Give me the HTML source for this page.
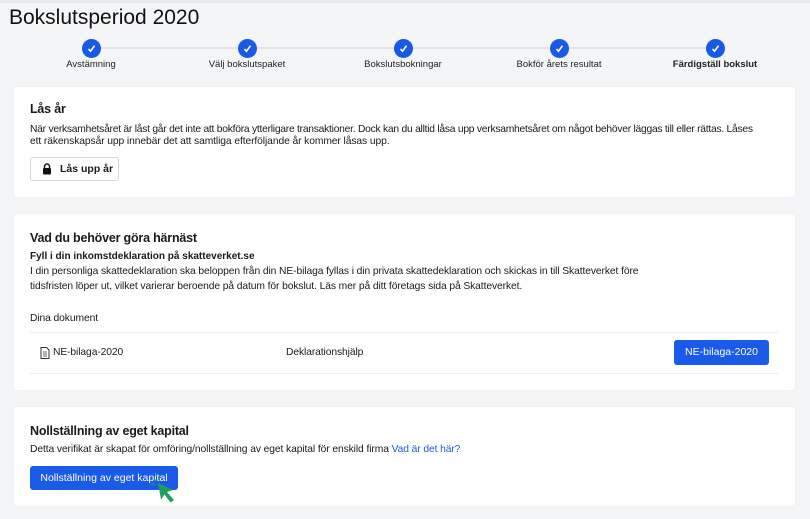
<!DOCTYPE html>
<html><head><meta charset="utf-8"><style>
*{margin:0;padding:0;box-sizing:border-box}
body{width:810px;height:519px;background:#f4f5f7;font-family:"Liberation Sans",sans-serif;color:#1a1a1a;position:relative;overflow:hidden}
.a{position:absolute;white-space:nowrap}
.card{position:absolute;left:14px;width:781px;background:#fff;border-radius:3px;box-shadow:0 0 1px rgba(0,0,0,.12)}
.t{font-size:10.3px;letter-spacing:-0.1px}
.h{font-size:12.5px;font-weight:bold;letter-spacing:-0.2px}
.c{position:absolute;top:39px;width:19px;height:19px;border-radius:50%;background:#1859e6}
.c svg{position:absolute;left:4px;top:4px}
.lb{position:absolute;top:59px;font-size:9.5px;width:140px;text-align:center;color:#222}
.btn{position:absolute;background:#1a5ae8;color:#fff;border-radius:3px;font-size:10.5px;text-align:center}
</style></head><body>
<div style="position:absolute;left:0;top:0;width:810px;height:3px;background:#e8e9eb"></div>
<div class="a" style="left:9px;top:6px;font-size:21px;color:#111">Bokslutsperiod 2020</div>
<div style="position:absolute;left:91px;top:47px;width:624px;height:2px;background:#e3e4e7"></div>
<div class="c" style="left:82px"><svg width="11" height="11" viewBox="0 0 11 11"><path d="M2.5 6l2 2.2 4-5.5" stroke="#fff" stroke-width="1.6" fill="none"/></svg></div>
<div class="c" style="left:238px"><svg width="11" height="11" viewBox="0 0 11 11"><path d="M2.5 6l2 2.2 4-5.5" stroke="#fff" stroke-width="1.6" fill="none"/></svg></div>
<div class="c" style="left:394px"><svg width="11" height="11" viewBox="0 0 11 11"><path d="M2.5 6l2 2.2 4-5.5" stroke="#fff" stroke-width="1.6" fill="none"/></svg></div>
<div class="c" style="left:550px"><svg width="11" height="11" viewBox="0 0 11 11"><path d="M2.5 6l2 2.2 4-5.5" stroke="#fff" stroke-width="1.6" fill="none"/></svg></div>
<div class="c" style="left:706px"><svg width="11" height="11" viewBox="0 0 11 11"><path d="M2.5 6l2 2.2 4-5.5" stroke="#fff" stroke-width="1.6" fill="none"/></svg></div>
<div class="lb" style="left:21px">Avstämning</div>
<div class="lb" style="left:177px">Välj bokslutspaket</div>
<div class="lb" style="left:333px">Bokslutsbokningar</div>
<div class="lb" style="left:489px">Bokför årets resultat</div>
<div class="lb" style="left:645px;font-weight:bold">Färdigställ bokslut</div>

<div class="card" style="top:87px;height:110px"></div>
<div class="a h" style="left:30px;top:102px">Lås år</div>
<div class="a t" style="left:30px;top:124px;letter-spacing:-0.25px">När verksamhetsåret är låst går det inte att bokföra ytterligare transaktioner. Dock kan du alltid låsa upp verksamhetsåret om något behöver läggas till eller rättas. Låses</div>
<div class="a t" style="left:30px;top:136px">ett räkenskapsår upp innebär det att samtliga efterföljande år kommer låsas upp.</div>
<div style="position:absolute;left:30px;top:157px;width:89px;height:24px;border:1px solid #d5d6d9;border-radius:3px;background:#fff"></div>
<svg class="a" style="left:42px;top:163px" width="10" height="12" viewBox="0 0 10 12"><path d="M2.5 5V3.5a2.5 2.5 0 015 0V5" stroke="#111" stroke-width="1.4" fill="none"/><rect x="1" y="5" width="8" height="6.5" rx="1" fill="#111"/></svg>
<div class="a" style="left:60px;top:163px;font-size:10.5px;font-weight:bold">Lås upp år</div>

<div class="card" style="top:214px;height:176px"></div>
<div class="a h" style="left:30px;top:231px">Vad du behöver göra härnäst</div>
<div class="a" style="left:30px;top:251px;font-size:10px;font-weight:bold">Fyll i din inkomstdeklaration på skatteverket.se</div>
<div class="a t" style="left:30px;top:266px">I din personliga skattedeklaration ska beloppen från din NE-bilaga fyllas i din privata skattedeklaration och skickas in till Skatteverket före</div>
<div class="a t" style="left:30px;top:281px">tidsfristen löper ut, vilket varierar beroende på datum för bokslut. Läs mer på ditt företags sida på Skatteverket.</div>
<div class="a t" style="left:30px;top:313px">Dina dokument</div>
<div style="position:absolute;left:30px;top:332px;width:748px;height:1px;background:#ebecee"></div>
<div style="position:absolute;left:30px;top:373px;width:748px;height:1px;background:#ebecee"></div>
<svg class="a" style="left:40px;top:347px" width="10" height="12" viewBox="0 0 10 12"><path d="M1 .5h5.5L9 3v8.5H1z" stroke="#333" fill="none"/><path d="M3 5h4M3 7h4M3 9h4" stroke="#333" stroke-width=".8"/></svg>
<div class="a t" style="left:53px;top:347px">NE-bilaga-2020</div>
<div class="a t" style="left:286px;top:347px">Deklarationshjälp</div>
<div class="btn" style="left:674px;top:340px;width:95px;height:25px;line-height:25px">NE-bilaga-2020</div>

<div class="card" style="top:407px;height:99px"></div>
<div class="a h" style="left:30px;top:424px">Nollställning av eget kapital</div>
<div class="a t" style="left:30px;top:444px">Detta verifikat är skapat för omföring/nollställning av eget kapital för enskild firma <span style="color:#1a5ae8">Vad är det här?</span></div>
<div class="btn" style="left:30px;top:466px;width:148px;height:24px;line-height:24px">Nollställning av eget kapital</div>
<svg class="a" style="left:150px;top:476px" width="32" height="32" viewBox="0 0 32 32"><path d="M8 7l15 7-6 2 7 8-3.5 2.5-6-8-3.5 5z" fill="#1fa05a"/><path d="M4 3l2.5 2.5M1 8h4M9 0v4" stroke="#1fa05a" stroke-width="1.3"/></svg>
</body></html>
